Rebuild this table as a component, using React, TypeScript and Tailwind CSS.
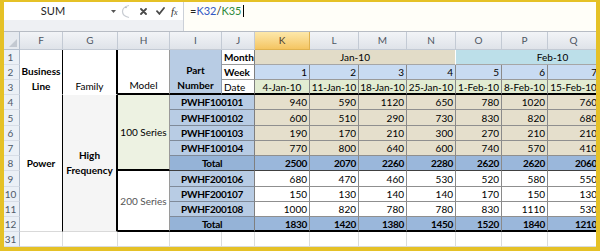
import clsx from "clsx"

const GRID =
  "grid w-max grid-cols-[16px_43px_55px_52px_52px_33px_55px_49px_48px_49px_46px_46px_52px_50px]"

const letters = ["F", "G", "H", "I", "J", "K", "L", "M", "N", "O", "P", "Q", "R"]
const rowNums = ["1", "2", "3", "4", "5", "6", "7", "8", "9", "10", "11", "12", "31"]
const weeks = ["1", "2", "3", "4", "5", "6", "7", "8"]
const dates = [
  "4-Jan-10",
  "11-Jan-10",
  "18-Jan-10",
  "25-Jan-10",
  "1-Feb-10",
  "8-Feb-10",
  "15-Feb-10",
  "22-Feb-10",
]

const parts = [
  "PWHF100101",
  "PWHF100102",
  "PWHF100103",
  "PWHF100104",
  "Total",
  "PWHF200106",
  "PWHF200107",
  "PWHF200108",
  "Total",
]
const partRow = [
  "row-start-4",
  "row-start-5",
  "row-start-6",
  "row-start-7",
  "row-start-8",
  "row-start-9",
  "row-start-10",
  "row-start-11",
  "row-start-12",
]

const values = [
  [940, 590, 1120, 650, 780, 1020, 760, 720],
  [600, 510, 290, 730, 830, 820, 680, 700],
  [190, 170, 210, 300, 270, 210, 210, 240],
  [770, 800, 640, 600, 740, 570, 410, 500],
  [2500, 2070, 2260, 2280, 2620, 2620, 2060, 2160],
  [680, 470, 460, 530, 520, 580, 550, 600],
  [150, 130, 140, 140, 170, 150, 130, 120],
  [1000, 820, 780, 780, 830, 1110, 530, 700],
  [1830, 1420, 1380, 1450, 1520, 1840, 1210, 1420],
]

function Cell({ className, children }: { className?: string; children?: React.ReactNode }) {
  return (
    <div
      className={clsx(
        "flex items-center overflow-hidden whitespace-nowrap border-r border-b px-[2px] leading-none",
        className
      )}
    >
      {children}
    </div>
  )
}

// two stacked lines inside a merged cell
function Lines({ a, b }: { a: string; b: string }) {
  return (
    <>
      <span className="h-[15px] leading-[15px]">{a}</span>
      <span className="h-[15px] leading-[15px]">{b}</span>
    </>
  )
}

function RowHeader({ n }: { n: string }) {
  return (
    <Cell className="justify-center border-r-[#b1bccb] border-b-[#d7dde6] bg-[#ebf0f6] pr-[4px] text-[10px] text-[#505a68]">
      {n}
    </Cell>
  )
}

function FormulaBar() {
  return (
    <div className="flex h-[31px] border-b border-[#b7bcc4]">
      <div className="flex w-[179px] flex-col">
        <div className="flex h-[18px] items-center bg-white">
          <div className="w-[98px] text-center text-[11px] text-[#1e1e1e]">SUM</div>
          <svg className="ml-[9px]" width="5" height="3" viewBox="0 0 5 3">
            <path d="M0 0h5L2.5 3z" fill="#555" />
          </svg>
          <svg className="ml-[5px]" width="9" height="15" viewBox="0 0 9 15">
            <path d="M8 1.5C3.5 2.5 1.5 5 1.5 7.5s2 5 6.5 6" fill="none" stroke="#c8ccd2" strokeWidth="1.2" />
            <circle cx="5" cy="3.5" r="0.7" fill="#9aa0a8" />
          </svg>
          <svg className="ml-[10px]" width="7" height="7" viewBox="0 0 7 7">
            <path d="M1 1l5 5M6 1L1 6" stroke="#4a4a4a" strokeWidth="1.8" strokeLinecap="round" />
          </svg>
          <svg className="ml-[9px]" width="9" height="8" viewBox="0 0 9 8">
            <path d="M1 4.2l2.4 2.6L8 1" fill="none" stroke="#4a4a4a" strokeWidth="1.8" strokeLinecap="round" />
          </svg>
          <span className="ml-[6px] font-[family-name:Liberation_Serif,serif] text-[11px] italic leading-none text-[#333]">
            f<span className="text-[8px]">x</span>
          </span>
        </div>
        <div className="flex-1 bg-[#eef0f3]" />
      </div>
      <div className="flex-1 border-l border-[#cbd0d8] bg-[#fffef8]">
        <div className="flex h-[18px] items-center pl-[6px] text-[11px] text-[#222]">
          =<span className="text-[#3358c4]">K32</span>/<span className="text-[#2f8a3d]">K35</span>
          <span className="ml-[1px] h-[12px] w-px bg-black" />
        </div>
      </div>
    </div>
  )
}

function ColumnHeaders() {
  return (
    <div className={clsx(GRID, "h-[19px]")}>
      <div className="flex items-end justify-end border-r border-b border-[#b5c0ce] bg-[#e6eaef] p-[2px]">
        <svg width="8" height="8" viewBox="0 0 8 8">
          <path d="M8 0v8H0z" fill="#c3c9d1" />
        </svg>
      </div>
      {letters.map((l) => (
        <div
          key={l}
          className={clsx(
            "flex items-center justify-center border-r border-b text-[10px]",
            l === "K"
              ? "border-[#e0b24f] bg-linear-to-b from-[#fde8aa] to-[#f4c561] text-[#4a4030]"
              : "border-[#c3cad4] bg-linear-to-b from-[#f2f4f7] to-[#dfe3e9] text-[#4e5662]"
          )}
        >
          {l}
        </div>
      ))}
    </div>
  )
}

export default function App() {
  return (
    <div className="h-[251px] w-[600px] bg-[#e5c126] pt-[2px] pr-[4px] pb-[4px] pl-[4px] font-[family-name:Lato,sans-serif]">
      <div className="flex h-full w-full flex-col overflow-hidden bg-white">
        <FormulaBar />
        <ColumnHeaders />
        <div
          className={clsx(
            GRID,
            "grid-rows-[15px_15px_15px_15px_16px_15px_15px_15px_16px_15px_15px_15px_15px] text-[10px] text-black"
          )}
        >
          {/* merged header cells */}
          <Cell className="col-start-2 row-span-3 row-start-1 flex-col justify-end text-center font-bold border-r-black border-b-white">
            <Lines a="Business" b="Line" />
          </Cell>
          <Cell className="col-start-3 row-span-3 row-start-1 items-end justify-center pb-[3px] border-r-2 border-r-black border-b-white">
            Family
          </Cell>
          <Cell className="col-start-4 row-span-3 row-start-1 items-end justify-center pb-[3px] border-r-[#9a9a9a] border-b-2 border-b-black">
            Model
          </Cell>
          <Cell className="col-start-5 row-span-3 row-start-1 flex-col justify-end bg-[#b8cce4] text-center font-bold border-r-[#8c9bb0] border-b-2 border-b-black">
            <Lines a="Part" b="Number" />
          </Cell>
          <Cell className="col-span-4 col-start-7 row-start-1 justify-center bg-[#e2dcc8] border-r-white border-b-[#a6a6a6]">
            Jan-10
          </Cell>
          <Cell className="col-span-4 col-start-11 row-start-1 justify-center bg-[#bcdfe9] border-r-[#9a9a9a] border-b-[#a6a6a6]">
            Feb-10
          </Cell>

          {/* merged body cells */}
          <Cell className="col-start-2 row-span-9 row-start-4 justify-center font-bold border-r-black border-b-[#d9d9d9]">
            Power
          </Cell>
          <Cell className="col-start-3 row-span-9 row-start-4 flex-col justify-center bg-[#f5f5f5] text-center font-bold border-r-2 border-r-black border-b-[#d9d9d9]">
            <Lines a="High" b="Frequency" />
          </Cell>
          <Cell className="col-start-4 row-span-5 row-start-4 justify-center bg-[#edf2e2] border-r-[#9a9a9a] border-b-2 border-b-black">
            100 Series
          </Cell>
          <Cell className="col-start-4 row-span-4 row-start-9 justify-center text-[#555] border-r-[#9a9a9a] border-b-2 border-b-black">
            200 Series
          </Cell>
          {parts.map((p, i) => (
            <Cell
              key={"p" + i}
              className={clsx(
                "col-span-2 col-start-5 justify-center font-bold tracking-[-0.3px] border-r-[#7f7f7f]",
                partRow[i],
                i === 4 || i === 8 ? "bg-[#95b3d7]" : "bg-[#b8cce4]",
                i === 8 ? "border-b-2 border-b-black" : i === 4 ? "border-b-[#404040]" : "border-b-[#7f8a99]"
              )}
            >
              {p}
            </Cell>
          ))}

          {/* row 1 */}
          <RowHeader n={rowNums[0]} />
          <Cell className="font-bold border-r-[#7f7f7f] border-b-[#9a9a9a]">Month</Cell>

          {/* row 2 */}
          <RowHeader n={rowNums[1]} />
          <Cell className="font-bold border-r-[#7f7f7f] border-b-[#9a9a9a]">Week</Cell>
          {weeks.map((w) => (
            <Cell key={"w" + w} className="justify-end bg-[#c8dbf2] border-r-[#8a8a8a] border-b-[#9a9a9a]">
              {w}
            </Cell>
          ))}

          {/* row 3 */}
          <RowHeader n={rowNums[2]} />
          <Cell className="border-r-[#7f7f7f] border-b-2 border-b-black">Date</Cell>
          {dates.map((d) => (
            <Cell key={d} className="justify-center bg-[#e2ecd2] border-r-[#8a8a8a] border-b-2 border-b-black">
              {d}
            </Cell>
          ))}

          {/* data rows */}
          {values.map((row, i) => {
            const total = i === 4 || i === 8
            return [
              <RowHeader key={"h" + i} n={rowNums[i + 3]} />,
              ...row.map((v, j) => (
                <Cell
                  key={i + "-" + j}
                  className={clsx(
                    "justify-end border-r-[#8a8a8a]",
                    i < 4 ? "bg-[#e5dfcc]" : total ? "bg-[#9ab7db] font-bold tracking-[-0.3px]" : "bg-white",
                    i === 8 ? "border-b-2 border-b-black" : i === 4 ? "border-b-[#404040]" : "border-b-[#8f8f8f]"
                  )}
                >
                  {v}
                </Cell>
              )),
            ]
          })}

          {/* row 31 */}
          <RowHeader n={rowNums[12]} />
          {letters.map((l) => (
            <Cell key={"e" + l} className="border-r-[#dadcdd] border-b-[#dadcdd]" />
          ))}
        </div>
      </div>
    </div>
  )
}
